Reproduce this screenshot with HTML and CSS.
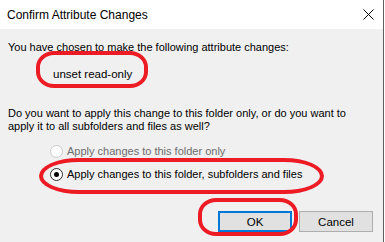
FILE: index.html
```html
<!DOCTYPE html>
<html>
<head>
<meta charset="utf-8">
<link rel="stylesheet" href="styles.css">
</head>
<body>
<div class="window">
  <div class="titlebar">
    <span class="title">Confirm Attribute Changes</span>
    <svg class="close" width="11" height="11" viewBox="0 0 11 11"><path d="M0.5 0.5 L10.5 10.5 M10.5 0.5 L0.5 10.5" stroke="#000" stroke-width="1" fill="none"/></svg>
  </div>
  <div class="content">
    <p class="intro">You have chosen to make the following attribute changes:</p>
    <p class="change">unset read-only</p>
    <p class="question">Do you want to apply this change to this folder only, or do you want to apply it to all subfolders and files as well?</p>
    <div class="options">
      <label class="option disabled"><span class="radio"></span>Apply changes to this folder only</label>
      <label class="option"><span class="radio checked"></span>Apply changes to this folder, subfolders and files</label>
    </div>
    <div class="buttons">
      <button class="btn default">OK</button>
      <button class="btn">Cancel</button>
    </div>
  </div>
  <div class="mark mark-change"></div>
  <div class="mark mark-option"></div>
  <div class="mark mark-ok"></div>
</div>
</body>
</html>
```
FILE: styles.css
```css
html, body {
  margin: 0;
  padding: 0;
  width: 385px;
  height: 242px;
  overflow: hidden;
  background: #ffffff;
}
.window {
  position: relative;
  width: 383px;
  height: 242px;
  border-right: 1px solid #5f5f5f;
  font-family: "Liberation Sans", Arial, sans-serif;
  font-size: 11px;
  color: #000;
  background: #f0f0f0;
  display: flex;
  flex-direction: column;
}
.titlebar {
  height: 29px;
  background: #fff;
  display: flex;
  align-items: center;
  justify-content: space-between;
  padding: 0 9px 0 7px;
  flex: none;
  font-size: 12px;
}
.close {
  display: block;
  margin-top: -1px;
}
.content {
  flex: 1;
  padding: 12px 8px 0 8px;
  display: flex;
  flex-direction: column;
}
p {
  margin: 0;
  line-height: 13px;
}
.change {
  margin: 14px 0 0 45px;
  font-size: 11.5px;
}
.question {
  margin-top: 26px;
  width: 362px;
}
.options {
  margin-top: 12px;
  padding-left: 42px;
  display: flex;
  flex-direction: column;
  gap: 10px;
}
.option {
  display: flex;
  align-items: center;
  gap: 4px;
  line-height: 13px;
}
.option.disabled {
  color: #6d6d6d;
}
.radio {
  width: 11px;
  height: 11px;
  border: 1px solid #333;
  border-radius: 50%;
  background: #fff;
  position: relative;
  flex: none;
}
.option.disabled .radio {
  border-color: #cccccc;
  background: #fff;
}
.radio.checked::after {
  content: "";
  position: absolute;
  left: 3px;
  top: 3px;
  width: 5px;
  height: 5px;
  border-radius: 50%;
  background: #000;
}
.buttons {
  margin-top: 30px;
  display: flex;
  justify-content: flex-end;
  gap: 7px;
  padding-right: 2px;
}
.btn {
  width: 74px;
  height: 21px;
  background: #e1e1e1;
  border: 1px solid #adadad;
  font-family: inherit;
  font-size: 11.5px;
  padding: 0;
  color: #000;
}
.btn.default {
  border: 2px solid #0078d7;
}
.mark {
  position: absolute;
  border: 4px solid #ed1c24;
  border-radius: 18px / 16px;
  box-sizing: border-box;
}
.mark-change {
  left: 36px;
  top: 51px;
  width: 112px;
  height: 37px;
}
.mark-option {
  left: 39px;
  top: 158px;
  width: 285px;
  height: 36px;
  border-radius: 40px / 18px;
}
.mark-ok {
  left: 198px;
  top: 198px;
  width: 100px;
  height: 38px;
}
```
